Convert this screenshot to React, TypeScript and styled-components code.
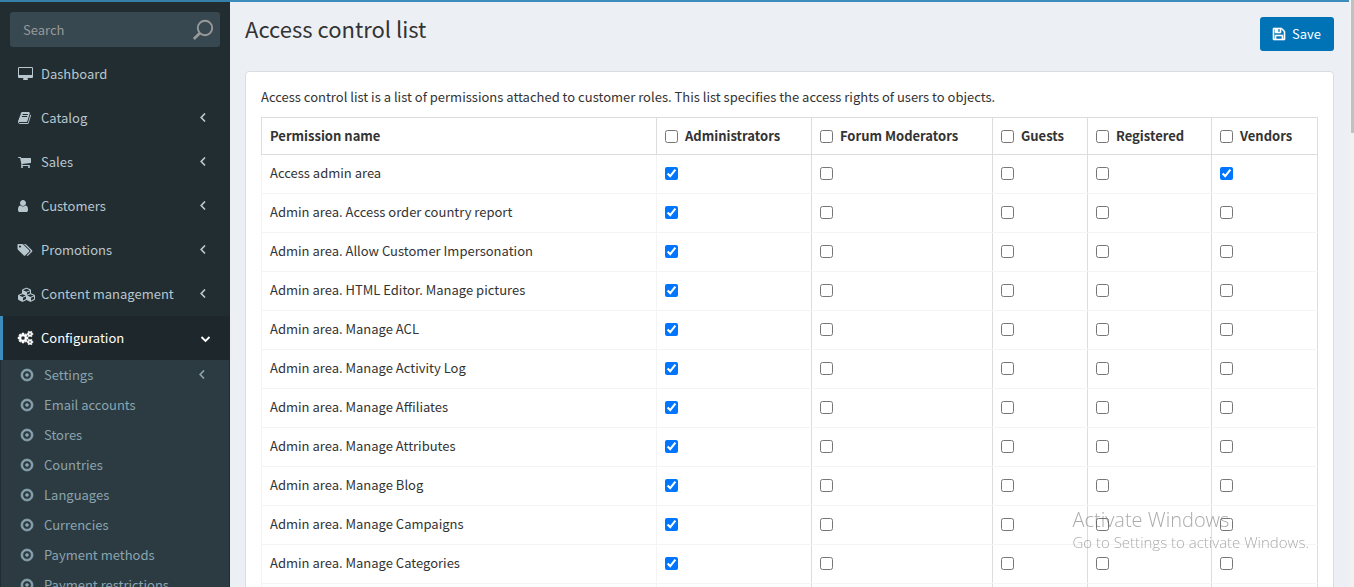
import React from "react";
import styled, { createGlobalStyle, css } from "styled-components";

const GlobalStyle = createGlobalStyle`
  *, *::before, *::after { box-sizing: border-box; }
  html, body { margin: 0; height: 100%; overflow: hidden; }
  body {
    background: #ecf0f5;
    color: #333;
    font-family: "Source Sans Pro", "Noto Sans CJK SC", "Liberation Sans", sans-serif;
    font-size: 13px;
    line-height: 20px;
  }
`;

const icons = {
  desktop: {
    box: "-64 0 1920 1792",
    d: "M1728 992v-832q0-13-9.500-22.500t-22.500-9.500h-1600q-13 0-22.500 9.500t-9.500 22.500v832q0 13 9.500 22.500t22.500 9.500h1600q13 0 22.500-9.500t9.500-22.500zm128-832v1088q0 66-47 113t-113 47h-544q0 37 16 77.500t32 71 16 43.500q0 26-19 45t-45 19h-512q-26 0-45-19t-19-45q0-14 16-44t32-70 16-78h-544q-66 0-113-47t-47-113v-1088q0-66 47-113t113-47h1600q66 0 113 47t47 113z",
  },
  book: {
    box: "64 0 1664 1792",
    d: "M1703 478q40 57 18 129l-275 906q-19 64-76.500 107.500t-122.500 43.500h-923q-77 0-148.500-53.500t-99.500-131.500q-24-67-2-127 0-4 3-27t4-37q1-8-3-21.500t-3-19.500q2-11 8-21t16.500-23.500 16.500-23.500q23-38 45-91.500t30-91.500q3-10 .5-30t-.5-28q3-11 17-28t17-23q21-36 42-92t25-90q1-9-2.500-32t.5-28q4-13 22-30.500t22-22.500q19-26 42.500-84.500t27.500-96.500q1-8-3-25.500t-2-26.500q2-8 9-18t18-23 17-21q8-12 16.500-30.500t15-35 16-36 19.500-32 26.500-23.500 36-11.500 47.500 5.500l-1 3q38-9 51-9h761q74 0 114 56t18 130l-274 906q-36 119-71.500 153.500t-128.500 34.500h-869q-27 0-38 15-11 16-1 43 24 70 144 70h923q29 0 56-15.500t35-41.500l300-987q7-22 5-57 38 15 59 43zm-1064 2q-4 13 2 22.500t20 9.500h608q13 0 25.500-9.500t16.500-22.500l21-64q4-13-2-22.500t-20-9.500h-608q-13 0-25.500 9.500t-16.500 22.500zm-83 256q-4 13 2 22.500t20 9.500h608q13 0 25.500-9.500t16.500-22.500l21-64q4-13-2-22.500t-20-9.500h-608q-13 0-25.500 9.500t-16.500 22.500z",
  },
  cart: {
    box: "64 0 1664 1792",
    d: "M704 1536q0 52-38 90t-90 38-90-38-38-90 38-90 90-38 90 38 38 90zm896 0q0 52-38 90t-90 38-90-38-38-90 38-90 90-38 90 38 38 90zm128-1088v512q0 24-16.500 42.500t-40.500 21.500l-1044 122q13 60 13 70 0 16-24 64h920q26 0 45 19t19 45-19 45-45 19h-1024q-26 0-45-19t-19-45q0-11 8-31.500t16-36 21.500-40 15.500-29.500l-177-823h-204q-26 0-45-19t-19-45 19-45 45-19h256q16 0 28.500 6.500t19.500 15.500 13 24.500 8 26 5.500 29.500 4.500 26h1201q26 0 45 19t19 45z",
  },
  user: {
    box: "256 0 1280 1792",
    d: "M1536 1399q0 109-62.500 187t-150.500 78h-854q-88 0-150.500-78t-62.500-187q0-85 8.500-160.500t31.500-152 58.500-131 94-89 134.500-34.500q131 128 313 128t313-128q76 0 134.500 34.500t94 89 58.500 131 31.500 152 8.500 160.500zm-256-887q0 159-112.500 271.500t-271.500 112.500-271.500-112.500-112.500-271.500 112.500-271.500 271.500-112.500 271.500 112.500 112.500 271.500z",
  },
  tags: {
    box: "0 0 1920 1792",
    d: "M384 448q0-53-37.500-90.500t-90.500-37.500-90.500 37.500-37.500 90.500 37.500 90.500 90.500 37.500 90.500-37.500 37.500-90.500zm1067 576q0 53-37 90l-491 492q-39 37-91 37-53 0-90-37l-715-716q-38-37-64.500-101t-26.500-117v-416q0-52 38-90t90-38h416q53 0 117 26.500t102 64.500l715 714q37 39 37 91zm384 0q0 53-37 90l-491 492q-39 37-91 37-36 0-59-14t-53-45l470-470q37-37 37-90 0-52-37-91l-715-714q-38-38-102-64.500t-117-26.500h224q53 0 117 26.500t102 64.500l715 714q37 39 37 91z",
  },
  cubes: {
    box: "-128 0 2304 1792",
    d: "M512 1727l384-192v-314l-384 164v342zm-64-454l404-173-404-173-404 173zm1088 454l384-192v-314l-384 164v342zm-64-454l404-173-404-173-404 173zm-448-293l384-165v-266l-384 164v267zm-64-379l441-189-441-189-441 189zm1088 518v416q0 36-19 67t-52 47l-448 224q-25 14-57 14t-57-14l-448-224q-4-2-7-4-2 2-7 4l-448 224q-25 14-57 14t-57-14l-448-224q-33-16-52-47t-19-67v-416q0-38 21.500-70t56.500-48l434-186v-400q0-38 21.500-70t56.500-48l448-192q23-10 50-10t50 10l448 192q35 16 56.500 48t21.500 70v400l434 186q36 16 57 48t21 70z",
  },
  cogs: {
    box: "-64 0 1920 1792",
    d: "M832 896q0-106-75-181t-181-75-181 75-75 181 75 181 181 75 181-75 75-181zm768 512q0-52-38-90t-90-38-90 38-38 90q0 53 37.500 90.500t90.500 37.500 90.500-37.500 37.500-90.500zm0-1024q0-52-38-90t-90-38-90 38-38 90q0 53 37.500 90.500t90.500 37.500 90.500-37.500 37.500-90.500zm-384 421v185q0 10-7 19.500t-16 10.500l-155 24q-11 35-32 76 34 48 90 115 7 11 7 20 0 12-7 19-23 30-82.500 89.500t-78.500 59.500q-11 0-21-7l-115-90q-37 19-77 31-11 108-23 155-7 24-30 24h-186q-11 0-20-7.500t-10-17.500l-23-153q-34-10-75-31l-118 89q-7 7-20 7-11 0-21-8-144-133-144-160 0-9 7-19 10-14 41-53t47-61q-23-44-35-82l-152-24q-10-1-17-9.500t-7-19.500v-185q0-10 7-19.500t16-10.500l155-24q11-35 32-76-34-48-90-115-7-11-7-20 0-12 7-20 22-30 82-89t79-59q11 0 21 7l115 90q34-18 77-32 11-108 23-154 7-24 30-24h186q11 0 20 7.500t10 17.500l23 153q34 10 75 31l118-89q8-7 20-7 11 0 21 8 144 133 144 160 0 8-7 19-12 16-42 54t-45 60q23 48 34 82l152 23q10 2 17 10.500t7 19.500zm640 533v140q0 16-149 31-12 27-30 52 51 113 51 138 0 4-4 7-122 71-124 71-8 0-46-47t-52-68q-20 2-30 2t-30-2q-14 21-52 68t-46 47q-2 0-124-71-4-3-4-7 0-25 51-138-18-25-30-52-149-15-149-31v-140q0-16 149-31 13-29 30-52-51-113-51-138 0-4 4-7 4-2 35-20t59-34 30-16q8 0 46 46.500t52 67.500q20-2 30-2t30 2q51-71 92-112l6-2q4 0 124 70 4 3 4 7 0 25-51 138 17 23 30 52 149 15 149 31zm0-1024v140q0 16-149 31-12 27-30 52 51 113 51 138 0 4-4 7-122 71-124 71-8 0-46-47t-52-68q-20 2-30 2t-30-2q-14 21-52 68t-46 47q-2 0-124-71-4-3-4-7 0-25 51-138-18-25-30-52-149-15-149-31v-140q0-16 149-31 13-29 30-52-51-113-51-138 0-4 4-7 4-2 35-20t59-34 30-16q8 0 46 46.500t52 67.500q20-2 30-2t30 2q51-71 92-112l6-2q4 0 124 70 4 3 4 7 0 25-51 138 17 23 30 52 149 15 149 31z",
  },
  floppy: {
    box: "128 0 1536 1792",
    d: "M512 1536h768v-384h-768v384zm896 0h128v-896q0-14-10-38.500t-20-34.500l-281-281q-10-10-34-20t-39-10v416q0 40-28 68t-68 28h-576q-40 0-68-28t-28-68v-416h-128v1280h128v-416q0-40 28-68t68-28h832q40 0 68 28t28 68v416zm-384-928v-320q0-13-9.500-22.500t-22.500-9.500h-192q-13 0-22.500 9.500t-9.500 22.500v320q0 13 9.500 22.500t22.500 9.500h192q13 0 22.500-9.500t9.500-22.500zm640 32v928q0 40-28 68t-68 28h-1344q-40 0-68-28t-28-68v-1344q0-40 28-68t68-28h928q40 0 88 20t76 48l280 280q28 28 48 76t20 88z",
  },
  dotCircle: {
    box: "128 0 1536 1792",
    d: "M1088 896q0 80-56 136t-136 56-136-56-56-136 56-136 136-56 136 56 56 136zm-192-544q-148 0-273 73t-198 198-73 273 73 273 198 198 273 73 273-73 198-198 73-273-73-273-198-198-273-73zm768 544q0 209-103 385.500t-279.500 279.500-385.500 103-385.500-103-279.500-279.500-103-385.500 103-385.500 279.500-279.500 385.500-103 385.500 103 279.500 279.500 103 385.500z",
  },
};

type IconName = keyof typeof icons;

const Glyph = styled.svg<{ $heavy?: boolean }>`
  display: block;
  flex: none;
  height: 14px;
  fill: currentColor;
  stroke: currentColor;
  stroke-width: ${(p) => (p.$heavy ? 80 : 0)};
  overflow: visible;
`;

function Icon({ name, heavy }: { name: IconName; heavy?: boolean }) {
  return (
    <Glyph viewBox={icons[name].box} $heavy={heavy} aria-hidden="true">
      <path d={icons[name].d} />
    </Glyph>
  );
}

const StrokeIcon = styled.svg<{ $size: number }>`
  display: block;
  flex: none;
  width: ${(p) => p.$size}px;
  height: ${(p) => p.$size}px;
  fill: none;
  stroke: currentColor;
`;

const Page = styled.div`
  display: grid;
  grid-template-columns: 230px minmax(0, 1fr) 5px;
  height: 100vh;
  overflow: hidden;
`;

const Sidebar = styled.aside`
  display: flex;
  flex-direction: column;
  min-height: 0;
  overflow: hidden;
  border-top: 2px solid #367fa9;
  background: #222d32;
`;

const SearchForm = styled.form`
  display: flex;
  flex: none;
  align-items: center;
  height: 35px;
  margin: 10px 10px 5px;
  padding: 0 6px 0 13px;
  border-radius: 3px;
  background: #374850;
`;

const SearchInput = styled.input`
  flex: 1;
  min-width: 0;
  padding: 0;
  border: 0;
  outline: 0;
  background: transparent;
  color: #999;
  font: inherit;
  &::placeholder { color: #999; opacity: 1; }
`;

const SearchButton = styled.button`
  padding: 0;
  border: 0;
  background: none;
  color: #999;
`;

const MenuList = styled.ul`
  flex: none;
  margin: 0;
  padding: 0;
  list-style: none;
`;

const MenuLink = styled.a<{ $active?: boolean }>`
  display: flex;
  align-items: center;
  height: 44px;
  padding: 0 18px 0 15px;
  border-left: 3px solid transparent;
  color: #b8c7ce;
  text-decoration: none;
  ${(p) => p.$active && css`
    border-left-color: #3c8dbc;
    background: #1e282c;
    color: #fff;
  `}
`;

const IconSlot = styled.span`
  flex: none;
  width: 23px;
`;

const LinkLabel = styled.span`
  flex: 1;
  white-space: nowrap;
`;

const Arrow = styled.span<{ $open?: boolean }>`
  flex: none;
  margin-right: ${(p) => (p.$open ? 0 : 4)}px;
`;

const SubMenu = styled.ul`
  margin: 0 1px;
  padding: 0;
  list-style: none;
  background: #2c3b41;
`;

const SubLink = styled.a`
  display: flex;
  align-items: center;
  height: 30px;
  padding: 0 18px 0 20px;
  color: #8aa4af;
  text-decoration: none;
`;

const Main = styled.main`
  min-width: 0;
  min-height: 0;
  overflow: hidden;
  border-top: 2px solid #3c8dbc;
  background: #ecf0f5;
`;

const PageHeader = styled.header`
  display: flex;
  justify-content: space-between;
  align-items: flex-start;
  padding: 15px 15px 0;
`;

const Title = styled.h1`
  margin: 0;
  font-size: 22px;
  font-weight: 400;
  line-height: 22px;
`;

const SaveButton = styled.button`
  display: flex;
  align-items: center;
  gap: 7px;
  height: 34px;
  padding: 0 13px;
  border: 0;
  border-radius: 3px;
  background: #0073b7;
  color: #fff;
  font: inherit;
`;

const Panel = styled.section`
  margin: 20px 15px;
  padding: 15px;
  border: 1px solid #d9dce0;
  border-radius: 4px;
  background: #fff;
`;

const Intro = styled.p`
  margin: 0 0 10px;
`;

const Table = styled.table`
  width: 100%;
  table-layout: fixed;
  border-collapse: collapse;
`;

const Col = styled.col<{ $width?: number }>`
  width: ${(p) => (p.$width ? `${p.$width}px` : "auto")};
`;

const HeadCell = styled.th`
  height: 37px;
  padding: 0 8px;
  border: 1px solid #ddd;
  font-weight: 700;
  text-align: left;
`;

const NameCell = styled.th`
  height: 39px;
  padding: 0 8px 2px;
  border: 1px solid #f4f4f4;
  font-weight: 400;
  text-align: left;
`;

const CheckCell = styled.td`
  padding: 0 8px 2px;
  border: 1px solid #f4f4f4;
  border-left-color: #ddd;
  border-right-color: #ddd;
`;

const RoleLabel = styled.label`
  display: flex;
  align-items: center;
  gap: 7px;
  white-space: nowrap;
`;

const Check = styled.input`
  display: block;
  flex: none;
  width: 13px;
  height: 13px;
  margin: 0;
`;

const ScrollTrack = styled.div`
  padding-left: 2px;
  background: #f1f1f1;
`;

const ScrollThumb = styled.div`
  height: 133px;
  background: #c1c1c1;
`;

const Watermark = styled.div`
  position: fixed;
  right: 45px;
  bottom: 33px;
  color: rgba(100, 100, 100, 0.55);
  font-family: "Open Sans", "Noto Sans", sans-serif;
  font-size: 15px;
  font-weight: 300;
  line-height: 23px;
  white-space: nowrap;
  pointer-events: none;
`;

const WatermarkTitle = styled.div`
  font-size: 20px;
`;

const menu: { label: string; icon: IconName; arrow: boolean }[] = [
  { label: "Dashboard", icon: "desktop", arrow: false },
  { label: "Catalog", icon: "book", arrow: true },
  { label: "Sales", icon: "cart", arrow: true },
  { label: "Customers", icon: "user", arrow: true },
  { label: "Promotions", icon: "tags", arrow: true },
  { label: "Content management", icon: "cubes", arrow: true },
];

const subMenu = [
  "Settings",
  "Email accounts",
  "Stores",
  "Countries",
  "Languages",
  "Currencies",
  "Payment methods",
  "Payment restrictions",
];

const roles = [
  { name: "Administrators", width: 155 },
  { name: "Forum Moderators", width: 181 },
  { name: "Guests", width: 95 },
  { name: "Registered", width: 124 },
  { name: "Vendors", width: 106 },
];

const permissions = [
  { name: "Access admin area", granted: ["Administrators", "Vendors"] },
  ...[
    "Access order country report",
    "Allow Customer Impersonation",
    "HTML Editor. Manage pictures",
    "Manage ACL",
    "Manage Activity Log",
    "Manage Affiliates",
    "Manage Attributes",
    "Manage Blog",
    "Manage Campaigns",
    "Manage Categories",
    "Manage Countries",
  ].map((name) => ({ name: `Admin area. ${name}`, granted: ["Administrators"] })),
];

function AngleLeft() {
  return (
    <Arrow>
      <StrokeIcon $size={10} viewBox="0 0 10 10" aria-hidden="true">
        <path d="M7 .5L3.200 4.500l3.800 4" strokeWidth="1.7" />
      </StrokeIcon>
    </Arrow>
  );
}

function AngleDown() {
  return (
    <Arrow $open>
      <StrokeIcon $size={12} viewBox="0 0 12 12" aria-hidden="true">
        <path d="M1.500 5l4 4 4-4" strokeWidth="1.8" />
      </StrokeIcon>
    </Arrow>
  );
}

export default function App() {
  return (
    <>
      <GlobalStyle />
      <Page>
        <Sidebar>
          <SearchForm role="search" onSubmit={(e) => e.preventDefault()}>
            <SearchInput type="text" placeholder="Search" aria-label="Search" />
            <SearchButton type="submit" aria-label="Submit search">
              <StrokeIcon $size={22} viewBox="0 0 22 22" aria-hidden="true">
                <circle cx="13" cy="9" r="7.2" strokeWidth="1.9" />
                <path d="M8 14l-6.200 6" strokeWidth="2.8" />
              </StrokeIcon>
            </SearchButton>
          </SearchForm>
          <nav aria-label="Administration">
            <MenuList>
              {menu.map((item) => (
                <li key={item.label}>
                  <MenuLink href="#">
                    <IconSlot><Icon name={item.icon} /></IconSlot>
                    <LinkLabel>{item.label}</LinkLabel>
                    {item.arrow && <AngleLeft />}
                  </MenuLink>
                </li>
              ))}
              <li>
                <MenuLink href="#" $active>
                  <IconSlot><Icon name="cogs" heavy /></IconSlot>
                  <LinkLabel>Configuration</LinkLabel>
                  <AngleDown />
                </MenuLink>
                <SubMenu>
                  {subMenu.map((label, i) => (
                    <li key={label}>
                      <SubLink href="#">
                        <IconSlot><Icon name="dotCircle" heavy /></IconSlot>
                        <LinkLabel>{label}</LinkLabel>
                        {i === 0 && <AngleLeft />}
                      </SubLink>
                    </li>
                  ))}
                </SubMenu>
              </li>
            </MenuList>
          </nav>
        </Sidebar>
        <Main>
          <PageHeader>
            <Title>Access control list</Title>
            <SaveButton type="button"><Icon name="floppy" heavy />Save</SaveButton>
          </PageHeader>
          <Panel>
            <Intro>
              Access control list is a list of permissions attached to customer roles. This list
              specifies the access rights of users to objects.
            </Intro>
            <Table>
              <colgroup>
                <Col />
                {roles.map((role) => <Col key={role.name} $width={role.width} />)}
              </colgroup>
              <thead>
                <tr>
                  <HeadCell scope="col">Permission name</HeadCell>
                  {roles.map((role) => (
                    <HeadCell key={role.name} scope="col">
                      <RoleLabel><Check type="checkbox" />{role.name}</RoleLabel>
                    </HeadCell>
                  ))}
                </tr>
              </thead>
              <tbody>
                {permissions.map((permission) => (
                  <tr key={permission.name}>
                    <NameCell scope="row">{permission.name}</NameCell>
                    {roles.map((role) => (
                      <CheckCell key={role.name}>
                        <Check
                          type="checkbox"
                          aria-label={`${permission.name}: ${role.name}`}
                          defaultChecked={permission.granted.includes(role.name)}
                        />
                      </CheckCell>
                    ))}
                  </tr>
                ))}
              </tbody>
            </Table>
          </Panel>
        </Main>
        <ScrollTrack aria-hidden="true"><ScrollThumb /></ScrollTrack>
      </Page>
      <Watermark>
        <WatermarkTitle>Activate Windows</WatermarkTitle>
        Go to Settings to activate Windows.
      </Watermark>
    </>
  );
}
